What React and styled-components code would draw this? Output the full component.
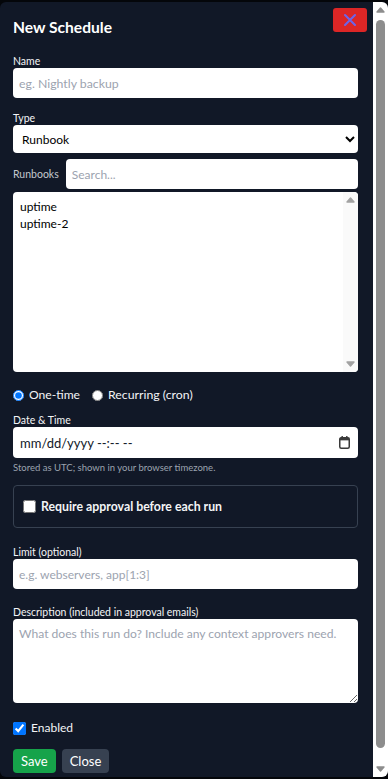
import React from 'react';
import styled, { createGlobalStyle } from 'styled-components';

const FONT = `"Lato", "Noto Sans", sans-serif`;

const Global = createGlobalStyle`
  html, body { margin: 0; padding: 0; background: #04060a; }
  body { font-family: ${FONT}; }
  * { box-sizing: border-box; }
`;

const Modal = styled.div`
  margin-top: 2px;
  width: 388px;
  height: 775px;
  display: flex;
  overflow: hidden;
  background: #111827;
  border-radius: 6px;
  color: #f3f4f6;
`;

const Form = styled.form`
  position: relative;
  flex: 1;
  min-width: 0;
  display: flex;
  flex-direction: column;
  padding: 13px 15px 0 13px;
`;

const Bar = styled.div`
  width: 15px;
  flex: none;
  display: flex;
  flex-direction: column;
  background: ${p => p.$track};
`;

const ArrowBox = styled.div`
  height: 17px;
  flex: none;
  display: flex;
  justify-content: center;
  align-items: ${p => (p.$down ? 'flex-start' : 'flex-end')};
  padding: ${p => (p.$down ? '6px 0 0' : '0 0 6px')};
`;

const Track = styled.div`
  flex: 1;
  padding-top: 1px;
  display: flex;
  justify-content: center;
`;

const Thumb = styled.div`
  width: 9px;
  border-radius: 5px;
  background: #8d8d8d;
`;

const Arrow = ({ down, color }) => (
  <ArrowBox $down={down}>
    <svg width="9" height="6" viewBox="0 0 9 6">
      <polygon
        points={down ? '1,1 8,1 4.5,5' : '1,5 8,5 4.5,1'}
        fill={color}
        stroke={color}
        strokeWidth="1.4"
        strokeLinejoin="round"
      />
    </svg>
  </ArrowBox>
);

const ScrollBar = ({ track, arrow, thumb }) => (
  <Bar $track={track}>
    <Arrow color={arrow} />
    <Track>{thumb ? <Thumb style={{ height: thumb }} /> : null}</Track>
    <Arrow down color={arrow} />
  </Bar>
);

const Title = styled.h2`
  margin: 0;
  font-size: 15.6px;
  line-height: 24px;
  font-weight: 700;
  color: #ffffff;
`;

const CloseButton = styled.button`
  position: absolute;
  top: 6px;
  right: 6px;
  width: 34px;
  height: 24px;
  border: none;
  border-radius: 3px;
  background: #dc2626;
  display: flex;
  align-items: center;
  justify-content: center;
  padding: 0;
  cursor: pointer;
`;

const Label = styled.label`
  display: block;
  font-size: 10.5px;
  line-height: 14px;
  color: ${p => (p.$muted ? '#c4c8cf' : '#f3f4f6')};
  margin-top: ${p => p.$top || 0}px;
  white-space: nowrap;
`;

const baseField = `
  display: block;
  width: 100%;
  border: none;
  border-radius: 4px;
  background: #ffffff;
  color: #111827;
  font-family: ${FONT};
  font-size: 12px;
  outline: none;
  &::placeholder { color: #9ca3af; }
`;

const Input = styled.input`
  ${baseField}
  height: 30px;
  padding: 0 6px;
  font-size: ${p => p.$size || 12}px;
`;

const DateWrap = styled.div`
  position: relative;
`;

const DateInput = styled.input`
  ${baseField}
  height: 31px;
  padding: 0 30px 0 7px;
  font-size: 13px;
  &::placeholder { color: #111827; }
`;

const CalendarIcon = styled.svg`
  position: absolute;
  right: 8px;
  top: 9px;
  pointer-events: none;
`;

const Select = styled.select`
  ${baseField}
  height: 28px;
  padding: 0 5px;
  color: #000;
`;

const InlineRow = styled.div`
  display: flex;
  align-items: center;
  gap: 7px;
  margin-top: ${p => p.$top || 0}px;
`;

const ListBox = styled.div`
  display: flex;
  height: 180px;
  margin-top: 3px;
  border-radius: 4px;
  overflow: hidden;
  background: #ffffff;
`;

const Options = styled.div`
  flex: 1;
  padding: 6px 7px;
  font-size: 12px;
  line-height: 17px;
  color: #000;
`;

const OptionItem = styled.div`
  cursor: default;
`;

const RadioRow = styled.div`
  display: flex;
  align-items: center;
  gap: 12px;
  height: 18px;
  margin-top: 14px;
`;

const Choice = styled.label`
  display: flex;
  align-items: center;
  gap: 5px;
  color: #f3f4f6;
  font-size: ${p => p.$size || 12}px;
  line-height: 16px;
  font-weight: ${p => (p.$bold ? 700 : 400)};
  input { margin: 0; flex: none; }
  input[type='radio'] { width: 11px; height: 11px; }
  input[type='checkbox'] { width: 13px; height: 13px; }
`;

const Help = styled.div`
  font-size: 9.5px;
  line-height: 14px;
  color: #9ca3af;
  margin-top: 3px;
`;

const ApprovalBox = styled.div`
  margin-top: 10px;
  height: 43px;
  border: 1px solid #374151;
  border-radius: 4px;
  padding: 0 9px;
  display: flex;
  align-items: center;
`;

const TextArea = styled.textarea`
  ${baseField}
  height: 84px;
  padding: 6px 6px;
  resize: vertical;
  line-height: 17px;
  font-size: 12.1px;
`;

const Buttons = styled.div`
  display: flex;
  gap: 6px;
  margin-top: 13px;
`;

const Button = styled.button`
  height: 24px;
  padding: 0 8px;
  border: none;
  border-radius: 4px;
  background: ${p => (p.$variant === 'save' ? '#16a34a' : '#374151')};
  color: #ffffff;
  font-family: ${FONT};
  font-size: 13px;
  cursor: pointer;
`;

const XIcon = () => (
  <svg width="14" height="14" viewBox="0 0 14 14">
    <path d="M2 2 L12 12 M12 2 L2 12" stroke="#6d64e8" strokeWidth="2.1" strokeLinecap="round" />
  </svg>
);

export default function App() {
  return (
    <>
      <Global />
      <Modal>
        <Form onSubmit={e => e.preventDefault()}>
          <Title>New Schedule</Title>
          <CloseButton type="button" aria-label="Close"><XIcon /></CloseButton>

          <Label $top={15}>Name</Label>
          <Input $size={12.3} placeholder="eg. Nightly backup" />

          <Label $top={13}>Type</Label>
          <Select defaultValue="runbook">
            <option value="runbook">Runbook</option>
            <option value="playbook">Playbook</option>
          </Select>

          <InlineRow $top={6}>
            <Label $muted>Runbooks</Label>
            <Input placeholder="Search..." />
          </InlineRow>
          <ListBox role="listbox" aria-multiselectable="true">
            <Options>
              <OptionItem role="option">uptime</OptionItem>
              <OptionItem role="option">uptime-2</OptionItem>
            </Options>
            <ScrollBar track="#fafafa" arrow="#a3a3a3" />
          </ListBox>

          <RadioRow>
            <Choice $size={12.1}><input type="radio" name="kind" defaultChecked /> One-time</Choice>
            <Choice $size={12.3}><input type="radio" name="kind" /> Recurring (cron)</Choice>
          </RadioRow>

          <Label $top={9}>Date &amp; Time</Label>
          <DateWrap>
            <DateInput type="text" placeholder="mm/dd/yyyy --:-- --" />
            <CalendarIcon width="11" height="13" viewBox="0 0 11 13">
              <rect x="0.75" y="1.75" width="9.5" height="10.5" rx="1.5" fill="none" stroke="#3a3a3a" strokeWidth="1.5" />
              <rect x="0.75" y="1.75" width="9.5" height="2.6" fill="#3a3a3a" />
              <rect x="2.5" y="0" width="1.4" height="2.5" fill="#3a3a3a" />
              <rect x="7.1" y="0" width="1.4" height="2.5" fill="#3a3a3a" />
            </CalendarIcon>
          </DateWrap>
          <Help>Stored as UTC; shown in your browser timezone.</Help>

          <ApprovalBox>
            <Choice $bold $size={12.3}><input type="checkbox" /> Require approval before each run</Choice>
          </ApprovalBox>

          <Label $top={17}>Limit (optional)</Label>
          <Input placeholder="e.g. webservers, app[1:3]" />

          <Label $top={16}>Description (included in approval emails)</Label>
          <TextArea placeholder="What does this run do? Include any context approvers need." />

          <InlineRow $top={17}>
            <Choice><input type="checkbox" defaultChecked /> Enabled</Choice>
          </InlineRow>

          <Buttons>
            <Button type="submit" $variant="save">Save</Button>
            <Button type="button">Close</Button>
          </Buttons>
        </Form>
        <ScrollBar track="#ffffff" arrow="#8d8d8d" thumb={728} />
      </Modal>
    </>
  );
}
